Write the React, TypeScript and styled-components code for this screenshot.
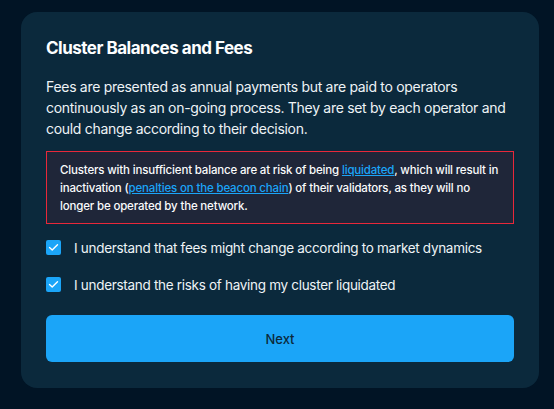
import React, {useState} from "react";
import styled, {createGlobalStyle} from "styled-components";

const GlobalStyle = createGlobalStyle`
    html, body {
        margin: 0;
        padding: 0;
        background: #011425;
        font-family: Inter, "Noto Sans", sans-serif;
    }
`;

const Page = styled.div`
    padding: 12px 15px 20px 21px;
    height: 409px;
    box-sizing: border-box;
`;

const Card = styled.div`
    width: 518px;
    box-sizing: border-box;
    background: #0b293c;
    border-radius: 16px;
    padding: 24px 25px 26px 25px;
    color: #fdfeff;
`;

const Title = styled.h2`
    margin: 0 0 16px;
    font-size: 17px;
    font-weight: 700;
    letter-spacing: -0.5px;
    line-height: 24px;
`;

const Text = styled.p`
    margin: 0 0 12px;
    font-size: 14px;
    line-height: 21px;
    color: #eef3f6;
    letter-spacing: -0.3px;
`;

const Warning = styled.div`
    border: 1px solid #e8283a;
    background: #1f2639;
    padding: 9px 12px 8px 13px;
    font-size: 11.5px;
    line-height: 18px;
    font-weight: 500;
    color: #fafbfc;
    letter-spacing: -0.17px;
    margin-bottom: 13px;
`;

const Link = styled.a`
    color: #1ba5f8;
    text-decoration: underline;
`;

const CheckRow = styled.label`
    display: flex;
    align-items: center;
    gap: 13px;
    height: 22px;
    margin-bottom: 15px;
    font-size: 13.5px;
    letter-spacing: -0.3px;
    color: #eef3f6;
    cursor: pointer;
`;

const Box = styled.span<{ $checked: boolean }>`
    width: 15px;
    height: 15px;
    border-radius: 2px;
    background: ${props => props.$checked ? "#1ba5f8" : "transparent"};
    border: ${props => props.$checked ? "none" : "1px solid #6b8ba0"};
    display: flex;
    align-items: center;
    justify-content: center;
    flex-shrink: 0;
    margin-top: -2px;
`;

const Button = styled.button`
    width: 100%;
    height: 47px;
    margin-top: 4px;
    border: none;
    border-radius: 6px;
    background: #1ba5f8;
    color: #0b2a3c;
    font-family: inherit;
    font-size: 13px;
    font-weight: 500;
    cursor: pointer;
`;

const Check = ({checked, label, onToggle}: {checked: boolean, label: string, onToggle: () => void}) => (
    <CheckRow onClick={onToggle}>
        <Box $checked={checked}>
            {checked && (
                <svg width="11" height="9" viewBox="0 0 11 9">
                    <path d="M1.5 4.6 L4.2 7 L9.5 1.8" fill="none" stroke="#ffffff" strokeWidth="1.4" strokeLinecap="round" strokeLinejoin="round"/>
                </svg>
            )}
        </Box>
        <span>{label}</span>
    </CheckRow>
);

const App = () => {
    const [checks, setChecks] = useState([true, true]);
    const toggle = (i: number) => setChecks(checks.map((c, j) => j === i ? !c : c));

    return (
        <Page>
            <GlobalStyle/>
            <Card>
                <Title>Cluster Balances and Fees</Title>
                <Text>
                    Fees are presented as annual payments but are paid to operators continuously as an on-going process. They are set by each operator and could change according to their decision.
                </Text>
                <Warning>
                    Clusters with insufficient balance are at risk of being <Link href="#">liquidated</Link>, which will result in inactivation (<Link href="#">penalties on the beacon chain</Link>) of their validators, as they will no longer be operated by the network.
                </Warning>
                <Check checked={checks[0]} onToggle={() => toggle(0)} label="I understand that fees might change according to market dynamics"/>
                <Check checked={checks[1]} onToggle={() => toggle(1)} label="I understand the risks of having my cluster liquidated"/>
                <Button type={"button"}>Next</Button>
            </Card>
        </Page>
    );
};

export default App;
